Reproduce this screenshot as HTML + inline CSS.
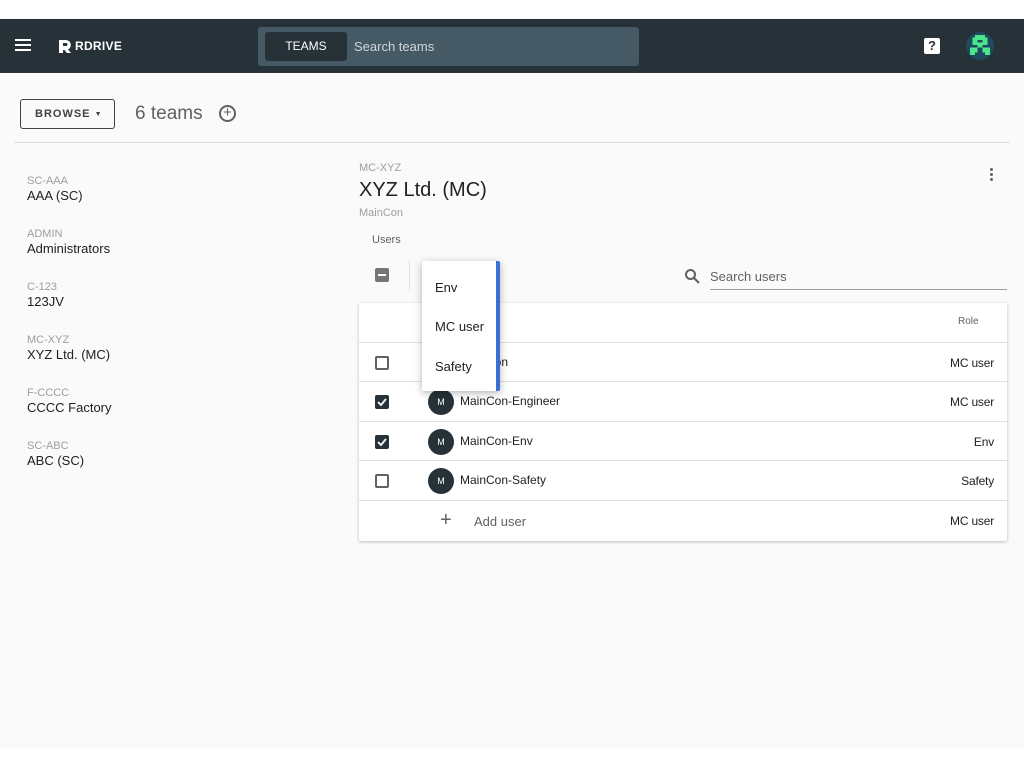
<!DOCTYPE html>
<html><head><meta charset="utf-8"><style>
*{box-sizing:border-box;margin:0;padding:0}
body{width:1024px;height:768px;background:#fff;font-family:"Liberation Sans",sans-serif;position:relative;overflow:hidden;color:#212121}
.abs{position:absolute}
#hdr{left:0;top:19px;width:1024px;height:54px;background:#263238;box-shadow:0 2px 4px rgba(0,0,0,.3)}
#main{left:0;top:73px;width:1024px;height:675px;background:#fafafa}
.sm{font-size:11px;color:#9e9e9e}
.lb{font-size:13px;color:#212121}
.row{position:absolute;left:359px;width:648px;height:40px;border-top:1px solid #e0e0e0}
.cb{position:absolute;left:16px;top:13px;width:14px;height:14px;border:2px solid #616161;border-radius:2px}
.cbc{background:#263238;border-color:#263238}
.av{position:absolute;left:69px;top:7px;width:26px;height:26px;border-radius:50%;background:#263238;color:#fff;font-size:9px;text-align:center;line-height:26px}
.nm{position:absolute;left:101px;top:12px;font-size:12px}
.rl{position:absolute;right:13px;top:13px;font-size:12px;letter-spacing:-.2px}
</style></head><body>
<div id="hdr" class="abs">
 <div class="abs" style="left:15px;top:20px;width:16px;height:2px;background:#fff;box-shadow:0 5px 0 #fff,0 10px 0 #fff"></div>
 <svg class="abs" style="left:56px;top:18px" width="18" height="18" viewBox="0 0 18 18"><path d="M3 3h7a5 5 0 0 1 2 9.5l3 3.5h-4l-2.5-3H7v3H3z M7 6v3h3a1.5 1.5 0 0 0 0-3z" fill="#fff"/></svg>
 <div class="abs" style="left:75px;top:20px;color:#fff;font-size:12px;font-weight:bold;letter-spacing:.3px">RDRIVE</div>
 <div class="abs" style="left:258px;top:8px;width:381px;height:39px;background:#455a64;border-radius:3px"></div>
 <div class="abs" style="left:265px;top:13px;width:82px;height:29px;background:#263238;border-radius:3px;color:#fff;font-size:12px;text-align:center;line-height:29px">TEAMS</div>
 <div class="abs" style="left:354px;top:20px;color:#cfd8dc;font-size:13px">Search teams</div>
 <div class="abs" style="left:924px;top:19px;width:16px;height:16px;background:#fff;border-radius:2px;color:#263238;font-size:13px;font-weight:bold;text-align:center;line-height:16px">?</div>
 <div class="abs" style="left:966px;top:13px;width:28px;height:28px;border-radius:50%;background:#1f4a5e"></div>
 <svg class="abs" style="left:970px;top:16px" width="20" height="20" viewBox="0 0 8 8" shape-rendering="crispEdges"><g fill="#4ce68a"><rect x="2" y="0" width="4" height="1"/><rect x="1" y="1" width="6" height="1"/><rect x="1" y="2" width="2" height="2"/><rect x="5" y="2" width="2" height="2"/><rect x="3" y="3" width="2" height="2"/><rect x="0" y="5" width="3" height="2"/><rect x="5" y="5" width="3" height="2"/><rect x="0" y="7" width="2" height="1"/><rect x="6" y="7" width="2" height="1"/></g></svg>
</div>
<div id="main" class="abs">
 <div class="abs" style="left:20px;top:26px;width:95px;height:30px;border:1px solid #424242;border-radius:3px;font-size:11px;font-weight:bold;letter-spacing:1px;color:#424242;line-height:28px;padding-left:14px">BROWSE <span style="font-size:7px;vertical-align:1px">▼</span></div>
 <div class="abs" style="left:135px;top:30px;font-size:19px;color:#616161">6 teams</div>
 <div class="abs" style="left:219px;top:32px;width:17px;height:17px;border:2px solid #616161;border-radius:50%;text-align:center;line-height:12px;font-size:15px;color:#616161">+</div>
 <div class="abs" style="left:14px;top:69px;width:996px;height:1px;background:#e0e0e0"></div>
 <div class="abs" style="left:27px;top:102px"><div class="sm">SC-AAA</div><div class="lb" style="margin-top:1px">AAA (SC)</div></div>
 <div class="abs" style="left:27px;top:155px"><div class="sm">ADMIN</div><div class="lb" style="margin-top:1px">Administrators</div></div>
 <div class="abs" style="left:27px;top:208px"><div class="sm">C-123</div><div class="lb" style="margin-top:1px">123JV</div></div>
 <div class="abs" style="left:27px;top:261px"><div class="sm">MC-XYZ</div><div class="lb" style="margin-top:1px">XYZ Ltd. (MC)</div></div>
 <div class="abs" style="left:27px;top:314px"><div class="sm">F-CCCC</div><div class="lb" style="margin-top:1px">CCCC Factory</div></div>
 <div class="abs" style="left:27px;top:367px"><div class="sm">SC-ABC</div><div class="lb" style="margin-top:1px">ABC (SC)</div></div>
 <div class="abs sm" style="left:359px;top:89px">MC-XYZ</div>
 <div class="abs" style="left:359px;top:106px;font-size:20px">XYZ Ltd. (MC)</div>
 <div class="abs sm" style="left:359px;top:134px">MainCon</div>
 <div class="abs" style="left:990px;top:95px;width:3px;height:3px;background:#616161;border-radius:50%;box-shadow:0 5px 0 #616161,0 10px 0 #616161"></div>
 <div class="abs" style="left:372px;top:161px;font-size:11px;color:#616161">Users</div>
 <div class="abs" style="left:375px;top:195px;width:14px;height:14px;background:#757575;border-radius:2px"><div style="margin:6px 3px;height:2px;background:#fff"></div></div>
 <div class="abs" style="left:409px;top:188px;width:1px;height:30px;background:#e0e0e0"></div>
 <svg class="abs" style="left:684px;top:195px" width="16" height="16" viewBox="0 0 16 16"><circle cx="6.5" cy="6.5" r="4.5" fill="none" stroke="#616161" stroke-width="2"/><path d="M10 10l5 5" stroke="#616161" stroke-width="2"/></svg>
 <div class="abs" style="left:710px;top:196px;font-size:13px;color:#616161">Search users</div>
 <div class="abs" style="left:710px;top:216px;width:297px;height:1px;background:#9e9e9e"></div>
 <div class="abs" style="left:359px;top:230px;width:648px;height:238px;background:#fff;box-shadow:0 1px 3px rgba(0,0,0,.25);border-radius:2px"></div>
 <div class="abs" style="left:958px;top:243px;font-size:10px;color:#616161">Role</div>
 <div class="row" style="top:269px"><div class="cb"></div><div class="av">M</div><div class="nm">MainCon</div><div class="rl">MC user</div></div>
 <div class="row" style="top:308px"><div class="cb cbc"><svg width="10" height="10" viewBox="0 0 10 10" style="display:block"><path d="M1 5l3 3 5-6" stroke="#fff" stroke-width="1.8" fill="none"/></svg></div><div class="av">M</div><div class="nm">MainCon-Engineer</div><div class="rl">MC user</div></div>
 <div class="row" style="top:348px"><div class="cb cbc"><svg width="10" height="10" viewBox="0 0 10 10" style="display:block"><path d="M1 5l3 3 5-6" stroke="#fff" stroke-width="1.8" fill="none"/></svg></div><div class="av">M</div><div class="nm">MainCon-Env</div><div class="rl">Env</div></div>
 <div class="row" style="top:387px"><div class="cb"></div><div class="av">M</div><div class="nm">MainCon-Safety</div><div class="rl">Safety</div></div>
 <div class="row" style="top:427px"><div style="position:absolute;left:81px;top:8px;font-size:20px;color:#616161;font-weight:300">+</div><div style="position:absolute;left:115px;top:13px;font-size:13px;color:#616161">Add user</div><div class="rl">MC user</div></div>
 <div class="abs" style="left:422px;top:188px;width:78px;height:130px;background:#fff;box-shadow:0 2px 8px rgba(0,0,0,.3);border-radius:2px;border-right:4px solid #3b6fd4">
  <div class="abs" style="left:13px;top:19px;font-size:13px">Env</div>
  <div class="abs" style="left:13px;top:58px;font-size:13px">MC user</div>
  <div class="abs" style="left:13px;top:98px;font-size:13px">Safety</div>
 </div>
</div>
</body></html>
